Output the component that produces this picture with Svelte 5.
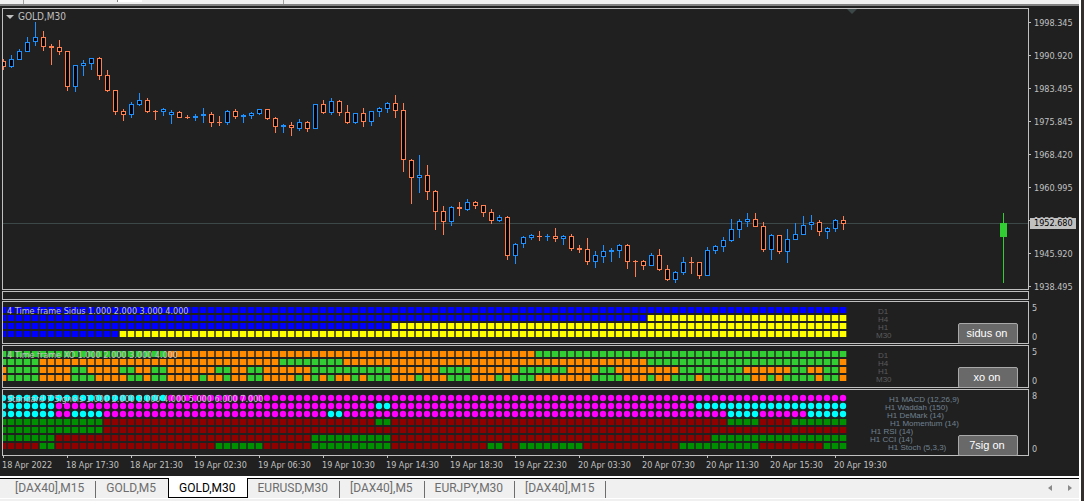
<script>
  const STEP = 8;

  // direction, high, body top, body bottom, low (plot rows)
  const candleData = `
    d 59 61 67 70,u 55 59 67 68,u 49 51 60 60,u 37 42 52 52,u 22 37 42 46,d 31 37 47 51,d 44 46 48 65,
    d 40 47 52 55,d 51 51 87 91,u 65 65 87 92,u 60 63 66 76,u 58 58 64 70,d 57 58 76 80,d 70 75 91 92,
    d 90 90 112 115,d 109 111 115 121,u 102 104 115 118,u 93 100 105 106,d 98 100 112 113,
    d 110 111 112 120,u 108 109 112 116,u 110 112 115 124,d 111 112 118 118,d 115 117 118 119,
    u 114 116 118 121,u 108 114 116 123,d 112 114 123 127,d 116 122 123 126,u 110 111 123 125,
    d 109 111 117 119,u 114 115 117 123,u 112 113 116 119,u 109 109 114 115,d 109 109 119 120,
    d 117 118 127 133,u 124 125 127 133,d 122 125 128 136,u 119 122 129 131,d 121 122 129 132,
    u 104 104 129 129,d 100 104 113 114,u 98 101 113 115,d 100 101 113 116,d 105 112 123 124,
    u 113 113 123 124,d 108 113 122 127,u 111 111 122 126,u 107 108 112 117,u 102 103 109 113,
    d 95 103 111 118,d 103 110 160 172,d 159 160 178 204,u 155 175 178 193,d 165 175 192 200,
    d 190 191 212 230,d 206 211 222 235,u 206 207 222 226,d 202 207 209 216,u 199 202 210 211,
    d 201 202 206 209,d 205 205 213 217,d 209 212 221 224,u 215 217 221 222,d 216 217 256 260,
    u 243 244 256 264,u 236 237 244 248,u 234 235 238 240,d 231 236 237 241,u 234 236 237 241,
    d 228 236 239 242,u 235 236 239 245,d 234 236 249 251,d 245 248 250 253,d 238 249 262 265,
    u 251 255 262 268,u 245 251 257 263,u 248 250 252 262,u 244 245 251 258,d 244 245 262 269,
    d 260 261 262 277,d 260 261 266 270,u 253 255 266 266,d 249 255 270 271,d 265 269 280 281,
    u 271 272 280 283,u 257 262 273 275,d 257 262 263 274,d 262 262 276 279,u 247 250 276 276,
    u 245 246 251 254,u 237 240 247 252,u 219 229 241 242,u 219 221 230 238,u 213 219 222 227,
    d 213 219 227 227,d 222 226 250 252,u 234 235 250 260,d 235 235 252 254,u 229 239 252 263,
    u 223 234 240 240,u 216 225 235 235,u 215 222 225 230,d 220 222 232 236,u 227 228 232 239,
    u 219 220 229 232,d 216 220 224 230`;

  const candles = candleData.split(',').map((row, i) => {
    const [dir, high, top, bottom, low] = row.trim().split(' ');
    return { x: i * STEP, dir, high: +high, top: +top, bottom: +bottom, low: +low };
  });

  // "b81 y25" -> 81 cells of b, then 25 cells of y
  function expand(runs) {
    return runs
      .split(' ')
      .flatMap((run) => Array(+run.slice(1)).fill(run[0]));
  }

  const panels = [
    {
      id: 'sidus',
      title: '4 Time frame Sidus 1.000 2.000 3.000 4.000',
      button: 'sidus on',
      max: 5,
      rows: ['b106', 'b81 y25', 'b49 y57', 'b15 y91'],
      legend: [[875, 'D1'], [875, 'H4'], [875, 'H1'], [873, 'M30']],
    },
    {
      id: 'xo',
      title: '4 Time frame XO 1.000 2.000 3.000 4.000',
      button: 'xo on',
      max: 5,
      rows: [
        'g21 o46 g39',
        'g5 o30 g8 o38 g24 o1',
        'o1 g4 o4 g2 o4 g2 o2 g2 o6 g2 o2 g2 o6 g10 o6 g4 o6 g6 o4 g2 o8 g8 o6 g2 o2 g2 o1',
        'o1 g4 o4 g3 o4 g2 o1 g2 o4 g1 o2 g1 o2 g2 o4 g1 o1 g1 o1 g1 o2 g1 o1 g3 o3 g1 o3 g3 o3 g1 o1 g3 o7 g4 o3 g1 o2 g3 o1 g6 o2 g1 o1 g4 o1 g2 o1',
      ],
      legend: [[875, 'D1'], [875, 'H4'], [875, 'H1'], [873, 'M30']],
    },
    {
      id: 'sig7',
      title: 'Standard 7 Signels 1.000 2.000 3.000 4.000 5.000 6.000 7.000',
      button: '7sig on',
      max: 8,
      rows: [
        'c21 m85',
        'c7 m40 c2 m38 c19',
        'c7 m2 c4 m28 c2 m48 c4 m6 c5',
        'd13 r34 d2 r42 d4 r4 d7',
        'd13 r93',
        'd7 r32 d10 r40 d17',
        'r5 d2 r20 d6 r6 d10 r12 d2 r2 d8 r12 d10 r8 d3',
      ],
      legend: [
        [886, 'H1 MACD (12,26,9)'],
        [882, 'H1 Waddah (150)'],
        [884, 'H1 DeMark (14)'],
        [887, 'H1 Momentum (14)'],
        [868, 'H1 RSI (14)'],
        [867, 'H1 CCI (14)'],
        [885, 'H1 Stoch (5,3,3)'],
      ],
    },
  ].map((panel) => ({ ...panel, rows: panel.rows.map(expand) }));

  const prices = [
    '1998.345', '1990.920', '1983.495', '1975.845', '1968.420',
    '1960.995', '1953.345', '1945.920', '1938.495',
  ];

  const times = [
    '18 Apr 2022', '18 Apr 17:30', '18 Apr 21:30', '19 Apr 02:30', '19 Apr 06:30',
    '19 Apr 10:30', '19 Apr 14:30', '19 Apr 18:30', '19 Apr 22:30', '20 Apr 03:30',
    '20 Apr 07:30', '20 Apr 11:30', '20 Apr 15:30', '20 Apr 19:30',
  ];

  const tabs = [
    '[DAX40],M15', 'GOLD,M5', 'GOLD,M30', 'EURUSD,M30',
    '[DAX40],M5', 'EURJPY,M30', '[DAX40],M15',
  ];
  let active = $state(2);
</script>

<div class="terminal">
  <div class="window">
    <div class="toolbar">
      <span class="grip"></span>
      <span class="box"></span>
      <span class="split"></span>
    </div>

    <main class="chart">
      <section class="panel main">
        <div class="plot">
          <svg class="canvas" aria-hidden="true">
            <g transform="translate(0 -9)">
              <rect class="level" x="0" y="223" width="100%" height="1" />
              <path class="shift" d="M844 9h10l-5 5z" />
              {#each candles as c}
                <g class={c.dir}>
                  <rect x={c.x} y={c.high} width="1" height={c.low - c.high} />
                  <rect x={c.x - 2} y={c.top} width="5" height={c.bottom - c.top} />
                  {#if c.bottom - c.top > 2}
                    <rect class="hollow" x={c.x - 1} y={c.top + 1} width="3" height={c.bottom - c.top - 2} />
                  {/if}
                </g>
              {/each}
              <g class="big">
                <rect x="1000" y="213" width="1" height="70" />
                <rect x="997" y="223" width="7" height="14" />
              </g>
            </g>
          </svg>
          <h1 class="symbol">
            <svg width="9" height="5" aria-hidden="true"><path d="M0 0h8L4 4z" /></svg>
            GOLD,M30
          </h1>
        </div>
        <div class="prices">
          {#each prices as price}
            <span class="price">{price}</span>
          {/each}
          <span class="current">1952.680</span>
        </div>
      </section>

      <section class="panel spacer">
        <div class="plot"></div>
      </section>

      {#each panels as panel}
        <section class="panel {panel.id}">
          <div class="plot">
            <svg class="canvas" aria-hidden="true">
              {#each panel.rows as row, r}
                {#each row as cell, i}
                  {#if cell === 'c' || cell === 'm'}
                    <circle class="cell {cell}" cx={i * STEP} cy={r * STEP + 8} r="3.2" />
                  {:else}
                    <rect class="edge {cell}" x={i * STEP - 4} y={r * STEP + 5} width="8" height="6" />
                    <rect class="cell {cell}" x={i * STEP - 3} y={r * STEP + 5} width="6" height="6" />
                  {/if}
                {/each}
              {/each}
              {#each panel.legend as [x, label], r}
                <text class="legend" {x} y={r * STEP + 12}>{label}</text>
              {/each}
            </svg>
            <h2 class="title">{panel.title}</h2>
            <button class="toggle">{panel.button}</button>
          </div>
          <div class="scale">
            <span>{panel.max}</span>
            <span>0</span>
          </div>
        </section>
      {/each}

      <div class="times">
        {#each times as time}
          <span class="time">{time}</span>
        {/each}
      </div>
    </main>

    <nav class="tabs">
      {#each tabs as tab, i}
        <button
          class="tab"
          class:active={i === active}
          class:before={i === active - 1}
          onclick={() => (active = i)}
        ><span>{tab}</span></button>
      {/each}
      <div class="arrows">
        <button class="arrow" aria-label="Scroll tabs left">
          <svg width="4" height="6"><path d="M4 0v6L0 3z" /></svg>
        </button>
        <button class="arrow" aria-label="Scroll tabs right">
          <svg width="4" height="6"><path d="M0 0v6l4-3z" /></svg>
        </button>
      </div>
    </nav>
  </div>
</div>

<style>
  :global(body) {
    margin: 0;
    background: #f0f0f0;
  }

  .terminal {
    box-sizing: border-box;
    padding-right: 3px;
    background: #332f2d;
    font-family: "DejaVu Sans Condensed", "DejaVu Sans", sans-serif;
    font-size: 9px;
    color: #c0c0c0;
  }

  .window {
    border-right: 2px solid #fff;
    background: #f0f0f0;
  }

  .toolbar {
    display: flex;
    height: 4px;
    border-bottom: 2px solid #808080;
    background: #f0f0f0;
  }

  .grip {
    width: 23px;
    border-right: 1px solid #a0a0a0;
  }

  .box {
    width: 24px;
    height: 2px;
    margin-left: 93px;
    border-left: 1px solid #808080;
    background: #fff;
  }

  .split {
    width: 141px;
    border-right: 1px solid #a0a0a0;
  }

  .chart {
    display: flex;
    flex-direction: column;
    gap: 1px;
    padding: 2px 0 0 2px;
    background: #202020;
    border-bottom: 2px solid #fff;
  }

  .panel {
    display: grid;
    grid-template-columns: minmax(0, 1fr) 50px;
    grid-template-rows: 100%;
  }

  .plot {
    position: relative;
    box-sizing: border-box;
    border: 1px solid #c0c0c0;
  }

  .main {
    height: 282px;
  }

  .spacer {
    height: 9px;
  }

  .sidus,
  .xo {
    height: 43px;
  }

  .sig7 {
    height: 67px;
  }

  .canvas {
    display: block;
    width: 100%;
    height: 100%;
    overflow: hidden;
  }

  .level,
  .shift {
    fill: #3c4848;
  }

  .u {
    fill: #1e90ff;
  }

  .d {
    fill: #ff7f50;
  }

  .hollow {
    fill: #000;
  }

  .big {
    fill: #32cd32;
  }

  .symbol,
  .title {
    position: absolute;
    top: 2px;
    left: 4px;
    margin: 0;
    font-size: 9px;
    line-height: 14px;
    font-weight: normal;
    white-space: nowrap;
  }

  .symbol {
    display: flex;
    align-items: center;
    gap: 3px;
    left: 3px;
    font-size: 10px;
    line-height: 12px;
    fill: #c0c0c0;
  }

  .edge {
    opacity: 0.3;
  }

  .cell.b, .edge.b { fill: #0000ff; }
  .cell.y, .edge.y { fill: #ffff00; }
  .cell.o, .edge.o { fill: #ff8c00; }
  .cell.g, .edge.g { fill: #32cd32; }
  .cell.d, .edge.d { fill: #008f00; }
  .cell.r, .edge.r { fill: #8f0000; }
  .cell.c { fill: #00ffff; }
  .cell.m { fill: #ff00ff; }

  .legend {
    font-family: "Liberation Sans", Arial, sans-serif;
    font-size: 8px;
    fill: #5c5c5c;
  }

  .sig7 .legend {
    fill: #708090;
  }

  .toggle {
    position: absolute;
    right: 10px;
    bottom: -1px;
    width: 60px;
    height: 21px;
    padding: 0 2px 2px 0;
    border: 1px solid #a9a9a9;
    border-radius: 2px;
    background: #696969;
    color: #fff;
    font-family: "Liberation Sans", Arial, sans-serif;
    font-size: 11px;
  }

  .prices {
    position: relative;
    display: flex;
    flex-direction: column;
    margin-top: -2px;
  }

  .price {
    display: flex;
    flex: none;
    align-items: center;
    gap: 3px;
    height: 33px;
  }

  .price::before {
    content: "";
    width: 2px;
    height: 1px;
    background: #c0c0c0;
  }

  .current {
    position: absolute;
    top: 212px;
    left: 1px;
    width: 46px;
    box-sizing: border-box;
    padding-left: 4px;
    background: #c0c0c0;
    color: #000;
    line-height: 11px;
  }

  .scale {
    display: flex;
    flex-direction: column;
    justify-content: space-between;
    padding: 1px 0 1px 3px;
    line-height: 12px;
  }

  .times {
    display: flex;
    height: 20px;
    margin-top: -1px;
    overflow: hidden;
  }

  .time {
    flex: none;
    width: 64px;
    line-height: 15px;
    white-space: nowrap;
  }

  .time::before {
    content: "";
    display: block;
    width: 1px;
    height: 2px;
    margin-left: 1px;
    background: #c0c0c0;
  }

  .tabs {
    display: flex;
    height: 23px;
    padding-left: 5px;
    background: linear-gradient(#000 1px, #f0f0f0 1px 20px, #fff 20px 21px, #f0f0f0 21px);
    font-family: Roboto, "Open Sans", sans-serif;
    font-size: 12px;
  }

  .tab {
    display: flex;
    box-sizing: border-box;
    height: 20px;
    padding: 3px 0 0;
    border: 0;
    background: none;
    color: #6d6d6d;
    font: inherit;
    line-height: 14px;
    white-space: nowrap;
  }

  .tab span {
    padding: 0 11px 0 10px;
    border-right: 1px solid #6d6d6d;
  }

  .tab.before span {
    border-color: transparent;
  }

  .tab.active {
    border: 1px solid #000;
    border-top: 0;
    background: #fff;
    color: #000;
  }

  .tab.active span {
    border: 0;
  }

  .arrows {
    display: flex;
    gap: 8px;
    margin-left: auto;
    padding-right: 3px;
  }

  .arrow {
    width: 12px;
    height: 17px;
    padding: 0;
    border: 0;
    background: none;
    fill: #8a8a8a;
  }
</style>
